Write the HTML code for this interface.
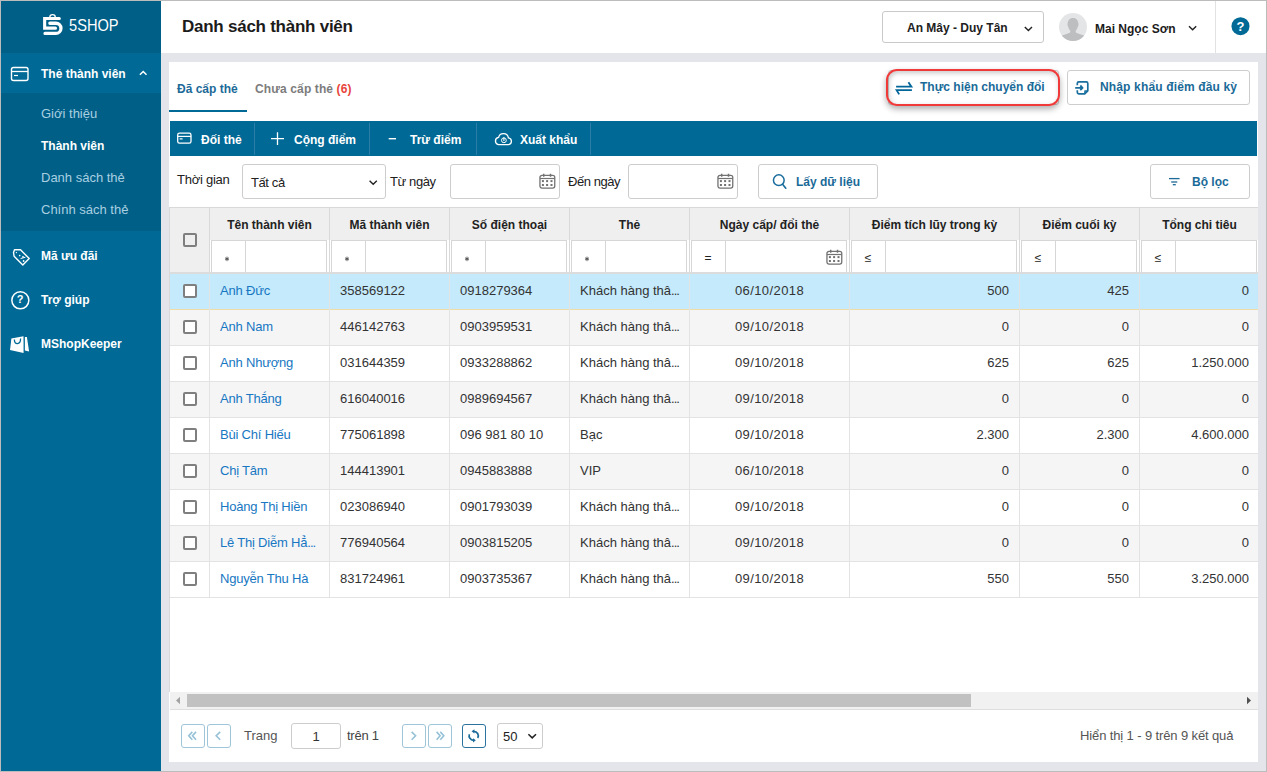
<!DOCTYPE html>
<html><head><meta charset="utf-8">
<style>
*{box-sizing:border-box;margin:0;padding:0}
html,body{width:1267px;height:772px;overflow:hidden;font-family:"Liberation Sans",sans-serif;color:#212121}
body{position:relative;background:#bcbcbc}
.a{position:absolute}
.t{position:absolute;white-space:nowrap;line-height:1}
.b12{font-size:12px;font-weight:bold}
.n13{font-size:13px}
.blue{color:#1a6a98}
svg{position:absolute;overflow:visible}
</style></head><body>
<!-- frame -->
<div class="a" style="left:1px;top:1px;width:1265px;height:770px;background:#e4e5ea"></div>
<!-- sidebar -->
<div class="a" style="left:1px;top:1px;width:160px;height:770px;background:#006996"></div>
<div class="a" style="left:1px;top:1px;width:160px;height:52px;background:#005f87"></div>
<div class="a" style="left:1px;top:93px;width:160px;height:138px;background:#005f87"></div>
<!-- header -->
<div class="a" style="left:161px;top:1px;width:1105px;height:52px;background:#fff"></div>
<!-- card -->
<div class="a" style="left:169px;top:62px;width:1089px;height:700px;background:#fff"></div>

<!-- sidebar content -->
<svg style="left:0;top:0" width="80" height="40" viewBox="0 0 80 40">
 <path fill="#fff" d="M43.1,17 H59.3 a1.55,1.55 0 0 1 0,3.1 H46.2 V26.5 H55.4 a1.65,1.65 0 0 1 0,3.3 H43.1 Z"/>
 <path fill="#fff" d="M49.9,21.6 H55.9 A6.7,6.7 0 0 1 55.9,35 H45 a1.6,1.6 0 0 1 0,-3.2 H55.9 A3.4,3.4 0 0 0 55.9,25 H49.9 a1.7,1.7 0 0 1 0,-3.4 Z"/>
 <path fill="none" stroke="#fff" stroke-width="1.3" d="M49.8,17.2 A2.75,2.6 0 0 1 55.3,17.2"/>
</svg>
<div class="t" style="left:69px;top:17px;font-size:17px;color:#fff;transform-origin:0 0;transform:scaleX(0.86)">5SHOP</div>

<svg style="left:0;top:60px" width="40" height="30" viewBox="0 60 40 30">
 <rect x="11.5" y="67.5" width="16.5" height="13" rx="2" fill="none" stroke="#fff" stroke-width="1.4"/>
 <line x1="11.5" y1="71.5" x2="28" y2="71.5" stroke="#fff" stroke-width="1.3"/>
 <line x1="14" y1="75.5" x2="18" y2="75.5" stroke="#fff" stroke-width="1.2"/>
</svg>
<div class="t b12" style="left:41px;top:68px;color:#fff">Thẻ thành viên</div>
<svg style="left:130px;top:60px" width="30" height="30" viewBox="130 60 30 30"><polyline points="139.9,74.7 143.2,71.5 146.5,74.7" fill="none" stroke="#fff" stroke-width="1.5"/></svg>

<div class="t n13" style="left:41px;top:107px;color:#a9cfe1">Giới thiệu</div>
<div class="t b12" style="left:41px;top:140px;color:#fff">Thành viên</div>
<div class="t n13" style="left:41px;top:171px;color:#a9cfe1">Danh sách thẻ</div>
<div class="t n13" style="left:41px;top:203px;color:#a9cfe1">Chính sách thẻ</div>

<svg style="left:0;top:240px" width="40" height="130" viewBox="0 240 40 130">
 <g fill="none" stroke="#fff" stroke-width="1.4" stroke-linejoin="round">
  <path d="M13.5,252.5 L14.5,249.8 L20.5,249.8 L29.2,258.5 L22.8,264.9 L14.1,256.2 Z"/>
  <circle cx="16.4" cy="252.6" r="0.7" fill="#fff" stroke="none"/><circle cx="19.7" cy="255.6" r="0.8" fill="#fff" stroke="none"/><circle cx="23.6" cy="261" r="0.9" fill="#fff" stroke="none"/><circle cx="23" cy="256.8" r="0.9" fill="#fff" stroke="none"/>
 </g>
 <g stroke="#fff" stroke-width="1" fill="none">
  <path d="M20.6,258.6 L25.4,257.2"/>
 </g>
 <circle cx="20.35" cy="300.35" r="8.5" fill="none" stroke="#fff" stroke-width="1.5"/>
 <text x="20.2" y="303.2" font-family="Liberation Sans" font-weight="bold" font-size="11" fill="#fff" text-anchor="middle">?</text>
 <path fill="#fff" d="M11.4,338.6 L23.5,336.2 L23.6,352.9 L10,350 Z"/>
 <path fill="#fff" d="M24.9,337.1 L26.9,336.9 L29.1,351.4 L24.9,350.6 Z"/>
 <path fill="none" stroke="#006996" stroke-width="1.3" d="M14.4,339.6 Q14.3,343.6 17.4,343.6 Q20.6,343.4 20.6,338.5"/>
</svg>
<div class="t b12" style="left:41px;top:250px;color:#fff">Mã ưu đãi</div>
<div class="t b12" style="left:41px;top:294px;color:#fff">Trợ giúp</div>
<div class="t b12" style="left:41px;top:338px;color:#fff">MShopKeeper</div>

<!-- header content -->
<div class="t" style="left:182px;top:18px;font-size:17px;font-weight:bold;letter-spacing:-0.25px;color:#1b1b1b">Danh sách thành viên</div>
<div class="a" style="left:882px;top:11px;width:162px;height:32px;border:1px solid #c9c9c9;border-radius:3px"></div>
<div class="t b12" style="left:907px;top:22px;color:#212121">An Mây - Duy Tân</div>
<svg style="left:1020px;top:20px" width="20" height="20" viewBox="1020 20 20 20"><polyline points="1024.8,27 1028.4,30.6 1032,27" fill="none" stroke="#222" stroke-width="1.4"/></svg>
<svg style="left:1059px;top:13px" width="28" height="28" viewBox="0 0 28 28">
 <defs><clipPath id="av"><circle cx="14" cy="14" r="14"/></clipPath></defs>
 <circle cx="14" cy="14" r="14" fill="#e4e5e7"/>
 <path clip-path="url(#av)" fill="#bdbec0" d="M14,4.9 C17.5,4.9 19.4,7.5 19.4,11 C19.6,11.6 19.6,12.8 18.9,13.4 C18.5,15.2 17.6,16.8 16.6,17.8 L16.8,19.4 C18.8,20.6 21.8,21.2 25,22.6 L25,28 L3,28 L3,22.6 C6.2,21.2 9.2,20.6 11.2,19.4 L11.4,17.8 C10.4,16.8 9.5,15.2 9.1,13.4 C8.4,12.8 8.4,11.6 8.6,11 C8.6,7.5 10.5,4.9 14,4.9 Z"/>
</svg>
<div class="t b12" style="left:1095px;top:23px;color:#1b1b1b">Mai Ngọc Sơn</div>
<svg style="left:1185px;top:20px" width="15" height="15" viewBox="1185 20 15 15"><polyline points="1189,26.2 1192.6,29.8 1196.2,26.2" fill="none" stroke="#222" stroke-width="1.4"/></svg>
<div class="a" style="left:1215px;top:1px;width:1px;height:52px;background:#e2e2e2"></div>
<svg style="left:1231px;top:17px" width="19" height="19" viewBox="0 0 19 19"><circle cx="9.5" cy="9.2" r="9" fill="#006996"/><text x="9.5" y="13.8" font-family="Liberation Sans" font-weight="bold" font-size="13" fill="#fff" text-anchor="middle">?</text></svg>

<!-- tabs -->
<div class="t b12" style="left:177px;top:83px;color:#1c6a98">Đã cấp thẻ</div>
<div class="t b12" style="left:255px;top:83px;color:#7c7c7c;letter-spacing:0.12px">Chưa cấp thẻ <span style="color:#e8453c">(6)</span></div>
<div class="a" style="left:169px;top:110px;width:78px;height:2px;background:#006996"></div>

<!-- action buttons -->
<div class="a" style="left:888px;top:70px;width:171px;height:35px;border:1px solid #cdcdcd;border-radius:3px;background:#fff"></div>
<div class="a" style="left:886px;top:69px;width:174px;height:37px;border:2.5px solid #f03a3a;border-radius:11px;box-shadow:0 3px 6px rgba(0,0,0,0.32), inset 0 3px 4px rgba(0,0,0,0.14), inset 3px 0 4px rgba(0,0,0,0.08)"></div>
<svg style="left:890px;top:78px" width="26" height="20" viewBox="890 78 26 20">
 <g fill="none" stroke="#006699" stroke-width="1.8">
  <path d="M896.1,86.7 H911.4 L908.4,82.2"/>
  <path d="M911.9,90.2 H896.6 L899.2,94.4"/>
 </g>
</svg>
<div class="t b12 blue" style="left:920px;top:81px">Thực hiện chuyển đổi</div>
<div class="a" style="left:1067px;top:70px;width:183px;height:35px;border:1px solid #cdcdcd;border-radius:3px;background:#fff"></div>
<svg style="left:1072px;top:78px" width="22" height="20" viewBox="1072 78 22 20">
 <g fill="none" stroke="#1a6f9e" stroke-width="1.7" stroke-linejoin="round">
  <path d="M1077.3,85.3 V83.4 Q1077.3,81.9 1078.8,81.9 H1086.3 Q1087.8,81.9 1087.8,83.4 V90.8 L1084.7,93.8 H1078.8 Q1077.3,93.8 1077.3,92.3 V90.3"/>
  <path d="M1084.9,93.6 V91 H1087.6" stroke-width="1.4"/>
  <path d="M1075.2,87.8 H1082.2 M1080.3,85.5 L1082.6,87.8 L1080.3,90.1" stroke-width="1.8"/>
 </g>
</svg>
<div class="t b12 blue" style="left:1100px;top:81px;letter-spacing:0.15px">Nhập khẩu điểm đầu kỳ</div>

<!-- toolbar -->
<div class="a" style="left:170px;top:121px;width:1087px;height:35px;background:#006996"></div>
<div class="a" style="left:254px;top:123px;width:1px;height:32px;background:#2a7ea8"></div>
<div class="a" style="left:369px;top:123px;width:1px;height:32px;background:#2a7ea8"></div>
<div class="a" style="left:476px;top:123px;width:1px;height:32px;background:#2a7ea8"></div>
<div class="a" style="left:590px;top:123px;width:1px;height:32px;background:#2a7ea8"></div>
<svg style="left:170px;top:121px" width="440" height="35" viewBox="170 121 440 35">
 <g fill="none" stroke="#fff">
  <rect x="177.7" y="133.2" width="13.3" height="10" rx="1.8" stroke-width="1.3"/>
  <line x1="177.7" y1="136.4" x2="191" y2="136.4" stroke-width="1.2"/>
  <line x1="179.6" y1="138.9" x2="182.6" y2="138.9" stroke-width="1.2"/>
  <path d="M271,138.6 H284 M277.5,132.2 V145" stroke-width="1.3"/>
  <path d="M388.7,138.7 H396" stroke-width="1.4"/>
  <path d="M498.5,144.7 H508.6 A3.5,3.5 0 0 0 508.4,137.8 A5,5 0 0 0 498.6,137.4 A3.7,3.7 0 0 0 498.5,144.7 Z" stroke-width="1.3"/>
  <circle cx="503.9" cy="140.3" r="2.4" stroke-width="1"/><path d="M503.9,137.2 V141" stroke-width="1.1"/>
 </g>
</svg>
<div class="t b12" style="left:201px;top:134px;color:#fff">Đối thẻ</div>
<div class="t b12" style="left:294px;top:134px;color:#fff">Cộng điểm</div>
<div class="t b12" style="left:410px;top:134px;color:#fff">Trừ điểm</div>
<div class="t b12" style="left:520px;top:134px;color:#fff">Xuất khẩu</div>

<!-- filter row -->
<div class="t n13" style="left:177px;top:173px;color:#212121;letter-spacing:-0.25px">Thời gian</div>
<div class="a" style="left:242px;top:164px;width:144px;height:35px;border:1px solid #cdcdcd;border-radius:3px"></div>
<div class="t n13" style="left:251px;top:176px;color:#212121;letter-spacing:-0.4px">Tất cả</div>
<svg style="left:365px;top:175px" width="16" height="14" viewBox="365 175 16 14"><polyline points="369.6,180.8 373.2,184.3 376.8,180.8" fill="none" stroke="#222" stroke-width="1.4"/></svg>
<div class="t n13" style="left:390px;top:175px;color:#212121;letter-spacing:-0.4px">Từ ngày</div>
<div class="a" style="left:450px;top:164px;width:110px;height:35px;border:1px solid #cdcdcd;border-radius:3px"></div>
<div class="t n13" style="left:568px;top:175px;color:#212121;letter-spacing:-0.45px">Đến ngày</div>
<div class="a" style="left:628px;top:164px;width:110px;height:35px;border:1px solid #cdcdcd;border-radius:3px"></div>
<div class="a" style="left:758px;top:164px;width:120px;height:35px;border:1px solid #cdcdcd;border-radius:3px"></div>
<svg style="left:770px;top:170px" width="20" height="22" viewBox="770 170 20 22">
 <circle cx="778.8" cy="180.2" r="5.35" fill="none" stroke="#186c9c" stroke-width="1.5"/>
 <line x1="782.6" y1="184.2" x2="785.8" y2="188.2" stroke="#186c9c" stroke-width="1.6" stroke-linecap="round"/>
</svg>
<div class="t b12 blue" style="left:796px;top:176px">Lấy dữ liệu</div>
<div class="a" style="left:1150px;top:164px;width:100px;height:35px;border:1px solid #cdcdcd;border-radius:3px"></div>
<svg style="left:1165px;top:174px" width="18" height="14" viewBox="1165 174 18 14">
 <g stroke="#1c6a98" stroke-width="1.3">
  <line x1="1169" y1="178.6" x2="1179.6" y2="178.6"/>
  <line x1="1171.2" y1="182" x2="1177.3" y2="182"/>
  <line x1="1172.8" y1="184.7" x2="1175.8" y2="184.7"/>
 </g>
</svg>
<div class="t b12 blue" style="left:1192px;top:176px">Bộ lọc</div>
<!-- table -->
<div class="a" style="left:169px;top:207px;width:1089px;height:503px;overflow:hidden">
<div class="a" style="left:0;top:0;width:1089px;height:1px;background:#d9d9d9"></div>
<div class="a" style="left:0;top:0;width:1px;height:485px;background:#d9d9d9"></div>
<div class="a" style="left:1px;top:1px;width:1088px;height:65px;background:#efefef"></div>
<div class="a" style="left:1px;top:65px;width:1088px;height:2px;background:#dcdcdc"></div>
<div class="a" style="left:40px;top:1px;width:1px;height:64px;background:#d9d9d9"></div>
<div class="a" style="left:160px;top:1px;width:1px;height:64px;background:#d9d9d9"></div>
<div class="a" style="left:280px;top:1px;width:1px;height:64px;background:#d9d9d9"></div>
<div class="a" style="left:400px;top:1px;width:1px;height:64px;background:#d9d9d9"></div>
<div class="a" style="left:520px;top:1px;width:1px;height:64px;background:#d9d9d9"></div>
<div class="a" style="left:680px;top:1px;width:1px;height:64px;background:#d9d9d9"></div>
<div class="a" style="left:850px;top:1px;width:1px;height:64px;background:#d9d9d9"></div>
<div class="a" style="left:970px;top:1px;width:1px;height:64px;background:#d9d9d9"></div>
<div class="a" style="left:14px;top:26px;width:14px;height:14px;border:2px solid #7f7f7f;border-radius:2px"></div>
<div class="t b12" style="left:41px;top:12px;width:119px;text-align:center;color:#222">Tên thành viên</div>
<div class="a" style="left:41px;top:33px;width:119px;height:32px;background:#fff"></div><div class="a" style="left:161px;top:33px;width:119px;height:32px;background:#fff"></div><div class="a" style="left:281px;top:33px;width:119px;height:32px;background:#fff"></div><div class="a" style="left:401px;top:33px;width:119px;height:32px;background:#fff"></div><div class="a" style="left:521px;top:33px;width:159px;height:32px;background:#fff"></div><div class="a" style="left:681px;top:33px;width:169px;height:32px;background:#fff"></div><div class="a" style="left:851px;top:33px;width:119px;height:32px;background:#fff"></div><div class="a" style="left:971px;top:33px;width:119px;height:32px;background:#fff"></div>
<div class="a" style="left:42px;top:33px;width:116px;height:32px;background:#fff;border:1px solid #d6d6d6;border-bottom:none"></div>
<div class="a" style="left:76px;top:33px;width:1px;height:32px;background:#d6d6d6"></div>
<svg style="left:54px;top:47.5px" width="8" height="8" viewBox="0 0 8 8"><g stroke="#333" stroke-width="0.75" fill="none"><path d="M4,1.6 V6.2 M2,2.8 L6,5 M2,5 L6,2.8"/></g></svg>
<div class="t b12" style="left:161px;top:12px;width:119px;text-align:center;color:#222">Mã thành viên</div>
<div class="a" style="left:162px;top:33px;width:116px;height:32px;background:#fff;border:1px solid #d6d6d6;border-bottom:none"></div>
<div class="a" style="left:196px;top:33px;width:1px;height:32px;background:#d6d6d6"></div>
<svg style="left:174px;top:47.5px" width="8" height="8" viewBox="0 0 8 8"><g stroke="#333" stroke-width="0.75" fill="none"><path d="M4,1.6 V6.2 M2,2.8 L6,5 M2,5 L6,2.8"/></g></svg>
<div class="t b12" style="left:281px;top:12px;width:119px;text-align:center;color:#222">Số điện thoại</div>
<div class="a" style="left:282px;top:33px;width:116px;height:32px;background:#fff;border:1px solid #d6d6d6;border-bottom:none"></div>
<div class="a" style="left:316px;top:33px;width:1px;height:32px;background:#d6d6d6"></div>
<svg style="left:294px;top:47.5px" width="8" height="8" viewBox="0 0 8 8"><g stroke="#333" stroke-width="0.75" fill="none"><path d="M4,1.6 V6.2 M2,2.8 L6,5 M2,5 L6,2.8"/></g></svg>
<div class="t b12" style="left:401px;top:12px;width:119px;text-align:center;color:#222">Thẻ</div>
<div class="a" style="left:402px;top:33px;width:116px;height:32px;background:#fff;border:1px solid #d6d6d6;border-bottom:none"></div>
<div class="a" style="left:436px;top:33px;width:1px;height:32px;background:#d6d6d6"></div>
<svg style="left:414px;top:47.5px" width="8" height="8" viewBox="0 0 8 8"><g stroke="#333" stroke-width="0.75" fill="none"><path d="M4,1.6 V6.2 M2,2.8 L6,5 M2,5 L6,2.8"/></g></svg>
<div class="t b12" style="left:521px;top:12px;width:159px;text-align:center;color:#222">Ngày cấp/ đổi thẻ</div>
<div class="a" style="left:522px;top:33px;width:156px;height:32px;background:#fff;border:1px solid #d6d6d6;border-bottom:none"></div>
<div class="a" style="left:556px;top:33px;width:1px;height:32px;background:#d6d6d6"></div>
<div class="t" style="left:522px;top:45px;width:34px;text-align:center;font-size:12px;color:#222">=</div>
<div class="t b12" style="left:681px;top:12px;width:169px;text-align:center;color:#222">Điểm tích lũy trong kỳ</div>
<div class="a" style="left:682px;top:33px;width:166px;height:32px;background:#fff;border:1px solid #d6d6d6;border-bottom:none"></div>
<div class="a" style="left:716px;top:33px;width:1px;height:32px;background:#d6d6d6"></div>
<div class="t" style="left:682px;top:45px;width:34px;text-align:center;font-size:12px;color:#222">≤</div>
<div class="t b12" style="left:851px;top:12px;width:119px;text-align:center;color:#222">Điểm cuối kỳ</div>
<div class="a" style="left:852px;top:33px;width:116px;height:32px;background:#fff;border:1px solid #d6d6d6;border-bottom:none"></div>
<div class="a" style="left:886px;top:33px;width:1px;height:32px;background:#d6d6d6"></div>
<div class="t" style="left:852px;top:45px;width:34px;text-align:center;font-size:12px;color:#222">≤</div>
<div class="t b12" style="left:971px;top:12px;width:119px;text-align:center;color:#222">Tổng chi tiêu</div>
<div class="a" style="left:972px;top:33px;width:116px;height:32px;background:#fff;border:1px solid #d6d6d6;border-bottom:none"></div>
<div class="a" style="left:1006px;top:33px;width:1px;height:32px;background:#d6d6d6"></div>
<div class="t" style="left:972px;top:45px;width:34px;text-align:center;font-size:12px;color:#222">≤</div>
<!--CAL2-->
<div class="a" style="left:1px;top:67px;width:1088px;height:36px;background:#c4eafb;border-bottom:1px solid #f0dca6"></div>
<div class="a" style="left:14px;top:77px;width:14px;height:14px;border:2px solid #7f7f7f;border-radius:2px;background:#fff"></div>
<div class="t n13" style="left:51px;top:77px;color:#1777c2;letter-spacing:-0.2px">Anh Đức</div>
<div class="t n13" style="left:171px;top:77px;color:#333">358569122</div>
<div class="t n13" style="left:291px;top:77px;color:#333">0918279364</div>
<div class="t n13" style="left:411px;top:77px;color:#333">Khách hàng thâ<span style="letter-spacing:-1px">...</span></div>
<div class="t n13" style="left:521px;top:77px;width:159px;text-align:center;color:#333;letter-spacing:0.4px">06/10/2018</div>
<div class="t n13" style="left:680px;top:77px;width:160px;text-align:right;color:#333">500</div>
<div class="t n13" style="left:850px;top:77px;width:110px;text-align:right;color:#333">425</div>
<div class="t n13" style="left:970px;top:77px;width:110px;text-align:right;color:#333">0</div>
<div class="a" style="left:1px;top:103px;width:1088px;height:36px;background:#f5f5f6;border-bottom:1px solid #e3e3e3"></div>
<div class="a" style="left:14px;top:113px;width:14px;height:14px;border:2px solid #7f7f7f;border-radius:2px;background:#fff"></div>
<div class="t n13" style="left:51px;top:113px;color:#1777c2;letter-spacing:-0.2px">Anh Nam</div>
<div class="t n13" style="left:171px;top:113px;color:#333">446142763</div>
<div class="t n13" style="left:291px;top:113px;color:#333">0903959531</div>
<div class="t n13" style="left:411px;top:113px;color:#333">Khách hàng thâ<span style="letter-spacing:-1px">...</span></div>
<div class="t n13" style="left:521px;top:113px;width:159px;text-align:center;color:#333;letter-spacing:0.4px">09/10/2018</div>
<div class="t n13" style="left:680px;top:113px;width:160px;text-align:right;color:#333">0</div>
<div class="t n13" style="left:850px;top:113px;width:110px;text-align:right;color:#333">0</div>
<div class="t n13" style="left:970px;top:113px;width:110px;text-align:right;color:#333">0</div>
<div class="a" style="left:1px;top:139px;width:1088px;height:36px;background:#ffffff;border-bottom:1px solid #e3e3e3"></div>
<div class="a" style="left:14px;top:149px;width:14px;height:14px;border:2px solid #7f7f7f;border-radius:2px;background:#fff"></div>
<div class="t n13" style="left:51px;top:149px;color:#1777c2;letter-spacing:-0.2px">Anh Nhượng</div>
<div class="t n13" style="left:171px;top:149px;color:#333">031644359</div>
<div class="t n13" style="left:291px;top:149px;color:#333">0933288862</div>
<div class="t n13" style="left:411px;top:149px;color:#333">Khách hàng thâ<span style="letter-spacing:-1px">...</span></div>
<div class="t n13" style="left:521px;top:149px;width:159px;text-align:center;color:#333;letter-spacing:0.4px">09/10/2018</div>
<div class="t n13" style="left:680px;top:149px;width:160px;text-align:right;color:#333">625</div>
<div class="t n13" style="left:850px;top:149px;width:110px;text-align:right;color:#333">625</div>
<div class="t n13" style="left:970px;top:149px;width:110px;text-align:right;color:#333">1.250.000</div>
<div class="a" style="left:1px;top:175px;width:1088px;height:36px;background:#f5f5f6;border-bottom:1px solid #e3e3e3"></div>
<div class="a" style="left:14px;top:185px;width:14px;height:14px;border:2px solid #7f7f7f;border-radius:2px;background:#fff"></div>
<div class="t n13" style="left:51px;top:185px;color:#1777c2;letter-spacing:-0.2px">Anh Thắng</div>
<div class="t n13" style="left:171px;top:185px;color:#333">616040016</div>
<div class="t n13" style="left:291px;top:185px;color:#333">0989694567</div>
<div class="t n13" style="left:411px;top:185px;color:#333">Khách hàng thâ<span style="letter-spacing:-1px">...</span></div>
<div class="t n13" style="left:521px;top:185px;width:159px;text-align:center;color:#333;letter-spacing:0.4px">09/10/2018</div>
<div class="t n13" style="left:680px;top:185px;width:160px;text-align:right;color:#333">0</div>
<div class="t n13" style="left:850px;top:185px;width:110px;text-align:right;color:#333">0</div>
<div class="t n13" style="left:970px;top:185px;width:110px;text-align:right;color:#333">0</div>
<div class="a" style="left:1px;top:211px;width:1088px;height:36px;background:#ffffff;border-bottom:1px solid #e3e3e3"></div>
<div class="a" style="left:14px;top:221px;width:14px;height:14px;border:2px solid #7f7f7f;border-radius:2px;background:#fff"></div>
<div class="t n13" style="left:51px;top:221px;color:#1777c2;letter-spacing:-0.2px">Bùi Chí Hiếu</div>
<div class="t n13" style="left:171px;top:221px;color:#333">775061898</div>
<div class="t n13" style="left:291px;top:221px;color:#333">096 981 80 10</div>
<div class="t n13" style="left:411px;top:221px;color:#333">Bạc</div>
<div class="t n13" style="left:521px;top:221px;width:159px;text-align:center;color:#333;letter-spacing:0.4px">09/10/2018</div>
<div class="t n13" style="left:680px;top:221px;width:160px;text-align:right;color:#333">2.300</div>
<div class="t n13" style="left:850px;top:221px;width:110px;text-align:right;color:#333">2.300</div>
<div class="t n13" style="left:970px;top:221px;width:110px;text-align:right;color:#333">4.600.000</div>
<div class="a" style="left:1px;top:247px;width:1088px;height:36px;background:#f5f5f6;border-bottom:1px solid #e3e3e3"></div>
<div class="a" style="left:14px;top:257px;width:14px;height:14px;border:2px solid #7f7f7f;border-radius:2px;background:#fff"></div>
<div class="t n13" style="left:51px;top:257px;color:#1777c2;letter-spacing:-0.2px">Chị Tâm</div>
<div class="t n13" style="left:171px;top:257px;color:#333">144413901</div>
<div class="t n13" style="left:291px;top:257px;color:#333">0945883888</div>
<div class="t n13" style="left:411px;top:257px;color:#333">VIP</div>
<div class="t n13" style="left:521px;top:257px;width:159px;text-align:center;color:#333;letter-spacing:0.4px">06/10/2018</div>
<div class="t n13" style="left:680px;top:257px;width:160px;text-align:right;color:#333">0</div>
<div class="t n13" style="left:850px;top:257px;width:110px;text-align:right;color:#333">0</div>
<div class="t n13" style="left:970px;top:257px;width:110px;text-align:right;color:#333">0</div>
<div class="a" style="left:1px;top:283px;width:1088px;height:36px;background:#ffffff;border-bottom:1px solid #e3e3e3"></div>
<div class="a" style="left:14px;top:293px;width:14px;height:14px;border:2px solid #7f7f7f;border-radius:2px;background:#fff"></div>
<div class="t n13" style="left:51px;top:293px;color:#1777c2;letter-spacing:-0.2px">Hoàng Thị Hiền</div>
<div class="t n13" style="left:171px;top:293px;color:#333">023086940</div>
<div class="t n13" style="left:291px;top:293px;color:#333">0901793039</div>
<div class="t n13" style="left:411px;top:293px;color:#333">Khách hàng thâ<span style="letter-spacing:-1px">...</span></div>
<div class="t n13" style="left:521px;top:293px;width:159px;text-align:center;color:#333;letter-spacing:0.4px">09/10/2018</div>
<div class="t n13" style="left:680px;top:293px;width:160px;text-align:right;color:#333">0</div>
<div class="t n13" style="left:850px;top:293px;width:110px;text-align:right;color:#333">0</div>
<div class="t n13" style="left:970px;top:293px;width:110px;text-align:right;color:#333">0</div>
<div class="a" style="left:1px;top:319px;width:1088px;height:36px;background:#f5f5f6;border-bottom:1px solid #e3e3e3"></div>
<div class="a" style="left:14px;top:329px;width:14px;height:14px;border:2px solid #7f7f7f;border-radius:2px;background:#fff"></div>
<div class="t n13" style="left:51px;top:329px;color:#1777c2;letter-spacing:-0.2px">Lê Thị Diễm Hẳ<span style="letter-spacing:-1px">...</span></div>
<div class="t n13" style="left:171px;top:329px;color:#333">776940564</div>
<div class="t n13" style="left:291px;top:329px;color:#333">0903815205</div>
<div class="t n13" style="left:411px;top:329px;color:#333">Khách hàng thâ<span style="letter-spacing:-1px">...</span></div>
<div class="t n13" style="left:521px;top:329px;width:159px;text-align:center;color:#333;letter-spacing:0.4px">09/10/2018</div>
<div class="t n13" style="left:680px;top:329px;width:160px;text-align:right;color:#333">0</div>
<div class="t n13" style="left:850px;top:329px;width:110px;text-align:right;color:#333">0</div>
<div class="t n13" style="left:970px;top:329px;width:110px;text-align:right;color:#333">0</div>
<div class="a" style="left:1px;top:355px;width:1088px;height:36px;background:#ffffff;border-bottom:1px solid #e3e3e3"></div>
<div class="a" style="left:14px;top:365px;width:14px;height:14px;border:2px solid #7f7f7f;border-radius:2px;background:#fff"></div>
<div class="t n13" style="left:51px;top:365px;color:#1777c2;letter-spacing:-0.2px">Nguyễn Thu Hà</div>
<div class="t n13" style="left:171px;top:365px;color:#333">831724961</div>
<div class="t n13" style="left:291px;top:365px;color:#333">0903735367</div>
<div class="t n13" style="left:411px;top:365px;color:#333">Khách hàng thâ<span style="letter-spacing:-1px">...</span></div>
<div class="t n13" style="left:521px;top:365px;width:159px;text-align:center;color:#333;letter-spacing:0.4px">09/10/2018</div>
<div class="t n13" style="left:680px;top:365px;width:160px;text-align:right;color:#333">550</div>
<div class="t n13" style="left:850px;top:365px;width:110px;text-align:right;color:#333">550</div>
<div class="t n13" style="left:970px;top:365px;width:110px;text-align:right;color:#333">3.250.000</div>
<div class="a" style="left:40px;top:67px;width:1px;height:323px;background:#e3e3e3"></div>
<div class="a" style="left:160px;top:67px;width:1px;height:323px;background:#e3e3e3"></div>
<div class="a" style="left:280px;top:67px;width:1px;height:323px;background:#e3e3e3"></div>
<div class="a" style="left:400px;top:67px;width:1px;height:323px;background:#e3e3e3"></div>
<div class="a" style="left:520px;top:67px;width:1px;height:323px;background:#e3e3e3"></div>
<div class="a" style="left:680px;top:67px;width:1px;height:323px;background:#e3e3e3"></div>
<div class="a" style="left:850px;top:67px;width:1px;height:323px;background:#e3e3e3"></div>
<div class="a" style="left:970px;top:67px;width:1px;height:323px;background:#e3e3e3"></div>
<div class="a" style="left:1px;top:485px;width:1088px;height:17px;background:#f1f1f1"></div>
<div class="a" style="left:1px;top:502px;width:1088px;height:1px;background:#dedede"></div>
<div class="a" style="left:18px;top:487px;width:784px;height:13px;background:#c1c1c1"></div>
</div>
<svg style="left:170px;top:692px" width="1088" height="17" viewBox="170 692 1088 17"><path d="M180,696.8 V704.2 L176,700.5 Z" fill="#a3a3a3"/><path d="M1247,696.8 V704.2 L1251,700.5 Z" fill="#505050"/></svg>
<!-- calendars -->
<svg style="left:539px;top:174px" width="18" height="16" viewBox="0 0 18 16">
 <g fill="none" stroke="#727272"><rect x="0.95" y="1.35" width="14.8" height="12.75" rx="2" stroke-width="1.3"/><line x1="1" y1="4.5" x2="15.7" y2="4.5" stroke-width="1.2"/><path d="M4.7,-0.2 V2.8 M11.5,-0.2 V2.8" stroke-width="1.5"/></g>
 <g fill="#727272"><rect x="2.9" y="6.1" width="2" height="2"/><rect x="7.1" y="6.1" width="2" height="2"/><rect x="11.5" y="6.1" width="2" height="2"/><rect x="2.9" y="10" width="2" height="2"/><rect x="7.1" y="10" width="2" height="2"/><rect x="11.5" y="10" width="2" height="2"/></g>
</svg>
<svg style="left:717px;top:174px" width="18" height="16" viewBox="0 0 18 16">
 <g fill="none" stroke="#727272"><rect x="0.95" y="1.35" width="14.8" height="12.75" rx="2" stroke-width="1.3"/><line x1="1" y1="4.5" x2="15.7" y2="4.5" stroke-width="1.2"/><path d="M4.7,-0.2 V2.8 M11.5,-0.2 V2.8" stroke-width="1.5"/></g>
 <g fill="#727272"><rect x="2.9" y="6.1" width="2" height="2"/><rect x="7.1" y="6.1" width="2" height="2"/><rect x="11.5" y="6.1" width="2" height="2"/><rect x="2.9" y="10" width="2" height="2"/><rect x="7.1" y="10" width="2" height="2"/><rect x="11.5" y="10" width="2" height="2"/></g>
</svg>
<svg style="left:826px;top:250px" width="18" height="16" viewBox="0 0 18 16">
 <g fill="none" stroke="#727272"><rect x="0.95" y="1.35" width="14.8" height="12.75" rx="2" stroke-width="1.3"/><line x1="1" y1="4.5" x2="15.7" y2="4.5" stroke-width="1.2"/><path d="M4.7,-0.2 V2.8 M11.5,-0.2 V2.8" stroke-width="1.5"/></g>
 <g fill="#727272"><rect x="2.9" y="6.1" width="2" height="2"/><rect x="7.1" y="6.1" width="2" height="2"/><rect x="11.5" y="6.1" width="2" height="2"/><rect x="2.9" y="10" width="2" height="2"/><rect x="7.1" y="10" width="2" height="2"/><rect x="11.5" y="10" width="2" height="2"/></g>
</svg>
<!-- pagination -->
<div class="a" style="left:181px;top:724px;width:24px;height:24px;border:1px solid #9fc5d8;border-radius:3px"></div>
<div class="a" style="left:207px;top:724px;width:24px;height:24px;border:1px solid #9fc5d8;border-radius:3px"></div>
<div class="a" style="left:402px;top:724px;width:24px;height:24px;border:1px solid #9fc5d8;border-radius:3px"></div>
<div class="a" style="left:428px;top:724px;width:24px;height:24px;border:1px solid #9fc5d8;border-radius:3px"></div>
<div class="a" style="left:462px;top:724px;width:24px;height:24px;border:1px solid #2a739c;border-radius:3px"></div>
<svg style="left:170px;top:720px" width="330" height="32" viewBox="170 720 330 32">
 <g fill="none" stroke="#95c1d7" stroke-width="1.6">
  <path d="M192.3,731.9 L188.8,735.8 L192.3,739.7 M196,731.9 L192.5,735.8 L196,739.7"/>
  <path d="M220.2,731.9 L216.2,735.8 L220.2,739.7"/>
  <path d="M411.6,731.9 L415.6,735.8 L411.6,739.7"/>
  <path d="M436.6,731.9 L440.1,735.8 L436.6,739.7 M440.3,731.9 L443.8,735.8 L440.3,739.7"/>
 </g>
 <g fill="none" stroke="#1c6a98" stroke-width="1.7">
  <path d="M473.8,731.3 A4.5,4.5 0 0 1 477.7,738"/>
  <path d="M469.4,734.2 A4.5,4.5 0 0 0 473.6,740.3"/>
 </g>
 <g fill="#1c6a98">
  <path d="M471.6,731.3 L474.4,729.2 L474.4,733.4 Z"/>
  <path d="M475.8,740.3 L473,738.2 L473,742.4 Z"/>
 </g>
</svg>
<div class="t n13" style="left:244px;top:729px;color:#555">Trang</div>
<div class="a" style="left:291px;top:723px;width:50px;height:26px;border:1px solid #cdcdcd;border-radius:3px"></div>
<div class="t n13" style="left:291px;top:730px;width:50px;text-align:center;color:#333">1</div>
<div class="t n13" style="left:347px;top:729px;color:#444;letter-spacing:-0.25px">trên 1</div>
<div class="a" style="left:497px;top:723px;width:46px;height:26px;border:1px solid #cdcdcd;border-radius:3px"></div>
<div class="t n13" style="left:503px;top:730px;color:#222">50</div>
<svg style="left:525px;top:730px" width="15" height="12" viewBox="525 730 15 12"><polyline points="528.4,734.2 532.2,737.9 536,734.2" fill="none" stroke="#222" stroke-width="1.5"/></svg>
<div class="t n13" style="left:1080px;top:729px;color:#555;letter-spacing:-0.12px">Hiển thị 1 - 9 trên 9 kết quả</div>
<!-- SECTIONS -->
</body></html>
